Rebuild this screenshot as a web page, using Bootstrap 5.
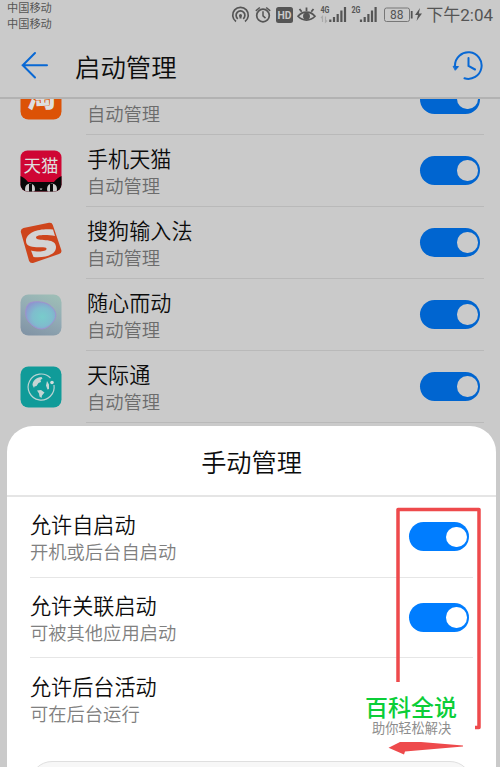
<!DOCTYPE html>
<html lang="zh-CN">
<head>
    <meta charset="UTF-8">
    <meta name="viewport" content="width=device-width, initial-scale=1.0">
    <title>启动管理</title>
    <link href="https://cdn.jsdelivr.net/npm/bootstrap@5.3.0/dist/css/bootstrap.min.css" rel="stylesheet">

    <style>
        body {
            width: 500px;
            height: 767px;
            background: #cacaca;
            color: #0c0c0c;
            font-family: "Noto Sans CJK SC", sans-serif;
            font-weight: 350;
        }

        .status-bar {
            height: 30px;
            padding: 0 7px 0 7px;
            color: #555;
        }

        .carrier {
            font-size: 11.2px;
            line-height: 15.5px;
        }

        .clock {
            font-family: Roboto, "Noto Sans CJK SC", sans-serif;
            font-size: 17px;
            line-height: 30px;
            font-weight: 400;
            white-space: nowrap;
        }

        .title-bar {
            height: 69px;
            padding: 3px 17px 0 20px;
            border-bottom: 2px solid #b2b2b2;
        }

        .page-title {
            font-size: 25.4px;
            font-weight: 350;
            line-height: 36px;
            margin: 1px 0 0 25px;
        }

        .app-list {
            height: 668px;
        }

        .app-row {
            height: 72px;
            padding-left: 20px;
        }

        .app-row > svg {
            width: 42px;
            height: 42px;
            margin-right: 24px;
        }

        .app-row:first-child,
        .app-row:first-child .app-body {
            height: 36px;
        }

        .app-row:first-child > svg {
            height: 21px;
        }

        .app-row:first-child .item-text {
            padding-top: 1px;
        }

        .half-toggle {
            height: 15px;
            overflow: hidden;
        }

        .half-toggle .toggle {
            margin-top: -14.5px;
        }

        .app-body {
            height: 72px;
            width: 398px;
            padding-right: 4px;
            border-bottom: 1px solid #b9b9b9;
        }

        .item-text {
            padding: 3px 0 0 1px;
        }

        .item-name {
            font-size: 21.1px;
            line-height: 27px;
        }

        .item-note {
            font-size: 18.3px;
            line-height: 27px;
            color: #6c6c6c;
        }

        .toggle {
            width: 60px;
            height: 29px;
            padding-right: 2.5px;
            background: #0065d0;
        }

        .toggle span {
            width: 20.5px;
            height: 20.5px;
            background: #cacaca;
        }

        .sheet {
            left: 7px;
            top: 426px;
            width: 489px;
            height: 341px;
            background: #fff;
            border-radius: 26px 26px 0 0;
        }

        .sheet-title {
            height: 71px;
            padding-top: 2px;
            font-size: 25.2px;
            border-bottom: 2.5px solid #e5e5e5;
        }

        .option-row {
            height: 80.7px;
            margin: 0 23px;
            padding-right: 4px;
            border-bottom: 1px solid #e6e6e6;
        }

        .option-row .item-text {
            padding: 3px 0 0;
        }

        .option-row .item-note {
            color: #808080;
        }

        .option-row .toggle {
            background: #007dff;
        }

        .option-row .toggle span {
            background: #fff;
        }

        .sheet-button {
            height: 44px;
            margin: 22px 24px 0 23px;
            background: #f7f7f7;
            border: 1px solid #dfdfdf;
        }

        .marker {
            left: 380px;
            top: 500px;
        }

        .brand-card {
            left: 361px;
            top: 682px;
            width: 114px;
            height: 60px;
            background: #fff;
            padding: 9px 0 0 4px;
        }

        .brand-name {
            font-size: 23px;
            font-weight: 500;
            line-height: 30px;
            color: #0bce38;
            white-space: nowrap;
        }

        .brand-note {
            font-size: 13.2px;
            font-weight: 400;
            line-height: 14px;
            padding-left: 7px;
            color: #8d8d8d;
            white-space: nowrap;
        }
    </style>
</head>
<body class="position-relative overflow-hidden">
    <header>
        <div class="status-bar d-flex justify-content-between">
            <div class="carrier fw-normal">
                <div>中国移动</div>
                <div>中国移动</div>
            </div>
            <div class="d-flex align-items-center">
                <svg width="196" height="30" viewBox="230 0 196 30" fill="none" stroke="#555" stroke-width="1.5">
                    <!-- hotspot -->
                    <path d="M236 21.500a7.800 7.800 0 1 1 9 0M237.800 18.800a4.400 4.400 0 1 1 5.400 0" stroke-width="1.700"/>
                    <path d="M240.500 15.500v3" stroke-width="2"/>
                    <circle cx="240.500" cy="15.600" r="1.500" fill="#555" stroke="none"/>
                    <!-- alarm -->
                    <circle cx="263" cy="15.500" r="6.300" stroke-width="1.700"/>
                    <path d="M263 11.300v4.500l2.500 2.300M255.800 10.800l4-3.300M270.200 10.800l-4-3.300"/>
                    <!-- HD -->
                    <rect x="276" y="7" width="17" height="16" rx="2.500" fill="#555" stroke="none"/>
                    <text x="284.500" y="18.700" text-anchor="middle" font-family="Roboto, sans-serif" font-weight="700" font-size="10.300" fill="#cacaca" stroke="none">HD</text>
                    <!-- eye care -->
                    <path d="M298 16.300c4.500-5.500 12.500-5.500 17 0-4.500 5-12.500 5-17 0z" stroke-width="1.700"/>
                    <circle cx="306.500" cy="16.200" r="2.700" fill="#555"/>
                    <path d="M306.500 7.500v3.500M299.500 9l2.200 2.800M313.500 9l-2.200 2.800" stroke-width="1.800"/>
                    <!-- signal 1 -->
                    <text x="320.500" y="13.200" font-family="Roboto, sans-serif" font-weight="700" font-size="9" textLength="9" lengthAdjust="spacingAndGlyphs" fill="#555" stroke="none">4G</text>
                    <path d="M322.500 22v-5.500l-1.500 1.500M325.500 16.500v5.500l1.500-1.500" stroke="#aaa" stroke-width="1.200"/>
                    <path d="M330.300 19.500v2.500M334 17v5M337.700 14v8M341.400 10.500v11.500M345 7v15" stroke-width="2.200"/>
                    <!-- signal 2 -->
                    <text x="351.500" y="13.200" font-family="Roboto, sans-serif" font-weight="700" font-size="9" textLength="9" lengthAdjust="spacingAndGlyphs" fill="#555" stroke="none">2G</text>
                    <path d="M361 19.500v2.500M364.700 17v5M368.400 14v8M372 10.500v11.500M375.600 7v15" stroke-width="2.200"/>
                    <!-- battery -->
                    <rect x="384.500" y="8" width="25" height="13.500" rx="2" stroke="#777" stroke-width="1"/>
                    <path d="M411.700 11v7.500" stroke-width="1.800"/>
                    <text x="396.800" y="19" text-anchor="middle" font-family="Roboto, sans-serif" font-size="12" font-weight="400" fill="#555" stroke="none">88</text>
                    <path d="M420 8l-5 7h3l-1.500 6 5.500-7.500h-3.200z" fill="#555" stroke="none"/>
                </svg>
                <div class="clock">下午2:04</div>
            </div>
        </div>
        <div class="title-bar d-flex align-items-center">
            <svg width="30" height="30" viewBox="0 0 30 30" fill="none" stroke="#0868d4" stroke-width="2" stroke-linecap="round" stroke-linejoin="round">
                <path d="M27 15.200H2.500M15 3L2.800 15.200 15 27.500"/>
            </svg>
            <h1 class="page-title">启动管理</h1>
            <svg class="ms-auto" width="32" height="32" viewBox="0 0 32 32" fill="none" stroke="#0868d4" stroke-width="2" stroke-linecap="round">
                <path d="M4 16.500A13.300 13.300 0 1 1 13.500 29.300"/>
                <path d="M17.500 9v8l6.500 3.500"/>
                <path d="M2.500 17.300l5 .300L4.500 21z" fill="#0868d4" stroke-width="1"/>
            </svg>
        </div>
    </header>

    <main class="app-list overflow-hidden">
        <!-- First row, scrolled halfway under the title bar -->
        <div class="app-row d-flex align-items-start">
            <svg viewBox="0 21 42 21">
                <rect x=".5" y=".5" width="41" height="41" rx="8" fill="#dc5206"/>
                <text x="21" y="29.500" text-anchor="middle" font-family="Noto Sans CJK SC, sans-serif" font-weight="900" font-size="29" fill="#dedede" transform="rotate(-3 21 21)">淘</text>
            </svg>
            <div class="app-body d-flex align-items-start justify-content-between">
                <div class="item-text">
                    <div class="item-note">自动管理</div>
                </div>
                <div class="half-toggle">
                    <div class="toggle rounded-pill d-flex align-items-center justify-content-end"><span class="rounded-circle"></span></div>
                </div>
            </div>
        </div>

        <div class="app-row d-flex align-items-center">
            <svg viewBox="0 0 42 42">
                <clipPath id="tmallClip"><rect x=".5" y=".5" width="41" height="41" rx="7"/></clipPath>
                <g clip-path="url(#tmallClip)">
                    <rect width="42" height="42" fill="#cf0634"/>
                    <path d="M0 26q4 1 8 6h26q4-5 8-6v16H0z" fill="#080808"/>
                    <ellipse cx="10" cy="39" rx="5" ry="5.500" fill="#cacaca"/>
                    <ellipse cx="32" cy="39" rx="5" ry="5.500" fill="#cacaca"/>
                    <path d="M10.500 34v8M31.500 34v8" stroke="#080808" stroke-width="3"/>
                    <path d="M19.500 38.500h3l-1.500 1.800z" fill="#cacaca"/>
                </g>
                <text x="21" y="21.800" text-anchor="middle" font-family="Noto Sans CJK SC, sans-serif" font-weight="400" font-size="17.500" fill="#dedede">天猫</text>
            </svg>
            <div class="app-body d-flex align-items-center justify-content-between">
                <div class="item-text">
                    <div class="item-name">手机天猫</div>
                    <div class="item-note">自动管理</div>
                </div>
                <div class="toggle rounded-pill d-flex align-items-center justify-content-end"><span class="rounded-circle"></span></div>
            </div>
        </div>

        <div class="app-row d-flex align-items-center">
            <svg viewBox="0 0 42 42">
                <path d="M3.500 6L29 .8q3-.6 3.800 2.200l8.500 25q.8 3.200-2.300 4L13 41q-3 .6-4-2.300L.9 10.200Q.3 7 3.500 6z" fill="#ce451c"/>
                <path d="M33 7.500C22 6 6 9 6 19c0 10 20 4 20.500 7.500C27 30 17 30 11 28.500l2.500 6.500C25 36 36.500 33 36 24.500 35.500 15 16 20 16 15.500c0-3 11-3 19-1.500z" fill="#d3d3d3"/>
            </svg>
            <div class="app-body d-flex align-items-center justify-content-between">
                <div class="item-text">
                    <div class="item-name">搜狗输入法</div>
                    <div class="item-note">自动管理</div>
                </div>
                <div class="toggle rounded-pill d-flex align-items-center justify-content-end"><span class="rounded-circle"></span></div>
            </div>
        </div>

        <div class="app-row d-flex align-items-center">
            <svg viewBox="0 0 42 42">
                <defs>
                    <linearGradient id="moodBg" x1=".7" y1="0" x2=".3" y2="1">
                        <stop offset="0" stop-color="#9dbdb6"/>
                        <stop offset=".5" stop-color="#92aab4"/>
                        <stop offset="1" stop-color="#8295a6"/>
                    </linearGradient>
                    <radialGradient id="moodBlob" cx=".55" cy=".55" r=".6">
                        <stop offset="0" stop-color="#78cccb"/>
                        <stop offset=".55" stop-color="#7fbdcd"/>
                        <stop offset="1" stop-color="#8c98cf"/>
                    </radialGradient>
                </defs>
                <rect x=".5" y=".5" width="41" height="41" rx="8" fill="url(#moodBg)"/>
                <path d="M11 8.500c5-1.500 14-1 19 3 4 3 7 7.500 5.500 12-1.500 5-8 11.500-14 11.500-7 0-14.500-7-15.500-13-.8-5 0-12 5-13.500z" fill="url(#moodBlob)" stroke="#a08fcf" stroke-width=".9"/>
            </svg>
            <div class="app-body d-flex align-items-center justify-content-between">
                <div class="item-text">
                    <div class="item-name">随心而动</div>
                    <div class="item-note">自动管理</div>
                </div>
                <div class="toggle rounded-pill d-flex align-items-center justify-content-end"><span class="rounded-circle"></span></div>
            </div>
        </div>

        <div class="app-row d-flex align-items-center">
            <svg viewBox="0 0 42 42">
                <rect x=".5" y=".5" width="41" height="41" rx="8" fill="#109b99"/>
                <path d="M30.500 12A13 13 0 1 0 34 19" fill="none" stroke="#b9d4d3" stroke-width="1.200"/>
                <circle cx="32" cy="16.500" r="1.800" fill="#d2dddd"/>
                <path d="M12.500 19c0-4 4-8 9-8l1 1.500-2 1.500.500 2-2.500 1-2 3-2 .500-.500 1.500zM17 24.500l4-.500 3.500 2.500-2.500 3-.500 2.500-2-1.500-.500-3zM27 15l2 3.500v4.500l-1.500.500-1.500-4z" fill="#c5d5d4"/>
            </svg>
            <div class="app-body d-flex align-items-center justify-content-between">
                <div class="item-text">
                    <div class="item-name">天际通</div>
                    <div class="item-note">自动管理</div>
                </div>
                <div class="toggle rounded-pill d-flex align-items-center justify-content-end"><span class="rounded-circle"></span></div>
            </div>
        </div>
    </main>

    <!-- Bottom sheet over the app list -->
    <section class="sheet position-absolute overflow-hidden">
        <div class="sheet-title d-flex align-items-center justify-content-center">手动管理</div>
        <div class="option-row d-flex align-items-center justify-content-between">
            <div class="item-text">
                <div class="item-name">允许自启动</div>
                <div class="item-note">开机或后台自启动</div>
            </div>
            <div class="toggle rounded-pill d-flex align-items-center justify-content-end"><span class="rounded-circle"></span></div>
        </div>
        <div class="option-row d-flex align-items-center justify-content-between">
            <div class="item-text">
                <div class="item-name">允许关联启动</div>
                <div class="item-note">可被其他应用启动</div>
            </div>
            <div class="toggle rounded-pill d-flex align-items-center justify-content-end"><span class="rounded-circle"></span></div>
        </div>
        <div class="option-row border-0 d-flex align-items-center">
            <div class="item-text">
                <div class="item-name">允许后台活动</div>
                <div class="item-note">可在后台运行</div>
            </div>
        </div>
        <div class="sheet-button rounded-pill"></div>
    </section>

    <!-- Highlight frame and arrow -->
    <svg class="marker position-absolute" width="120" height="267" viewBox="380 500 120 267">
        <path d="M398 682V509.500H479V727.500H475" fill="none" stroke="#ee4a4c" stroke-width="3.500" stroke-linejoin="round"/>
        <path d="M388.500 747.800L400 742H421L463 745.500V746.500L405 751.500 404 754.500z" fill="#ee4a4c"/>
    </svg>
    <div class="brand-card position-absolute">
        <div class="brand-name">百科全说</div>
        <div class="brand-note">助你轻松解决</div>
    </div>

    <script src="https://cdn.jsdelivr.net/npm/bootstrap@5.3.0/dist/js/bootstrap.bundle.min.js"></script>
</body>
</html>
